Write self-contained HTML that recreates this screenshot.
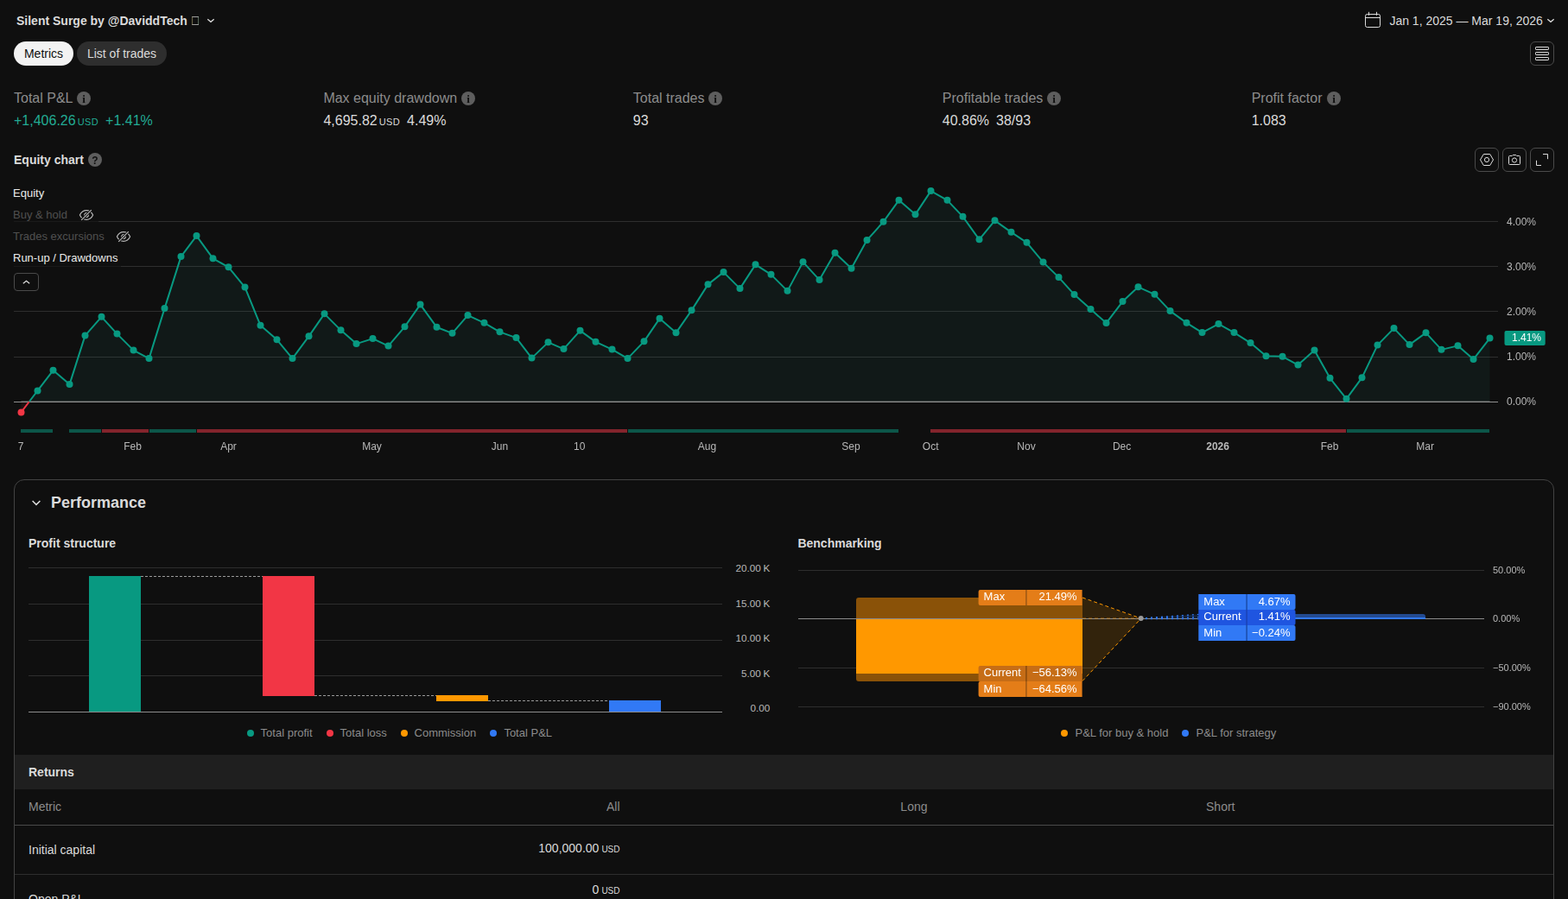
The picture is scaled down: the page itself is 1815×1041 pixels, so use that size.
<!DOCTYPE html>
<html lang="en"><head><meta charset="utf-8"><title>Silent Surge by @DaviddTech - Strategy report</title>
<style>
*{box-sizing:border-box}
html,body{margin:0;padding:0;background:#0f0f0f}
body{width:1815px;height:1041px;overflow:hidden;position:relative;font-family:"Liberation Sans",sans-serif;color:#dbdbdb;font-size:14px;line-height:1}
.a{position:absolute;white-space:nowrap}
.t{position:absolute;white-space:nowrap;line-height:16px;height:16px;font-size:14px}
.c{transform:translateX(-50%)}
.r{transform:translateX(-100%)}
.b{font-weight:700}
.btn{position:absolute;width:28px;height:28px;border:1px solid #4a4a4a;border-radius:6px}
.btn svg{position:absolute;left:-1px;top:-1px}
.lab{color:#8c8c8c;font-size:16px;line-height:18px;height:18px}
.val{color:#dbdbdb;font-size:16px;line-height:18px;height:18px}
.usd{font-variant-caps:all-small-caps;margin-left:2px}
.g8{margin-left:8px}
.ic{position:absolute;width:16px;height:16px;color:#0f0f0f;text-align:center}
.gsl{position:absolute;left:0;top:0;width:1815px;height:1041px;will-change:transform;pointer-events:none}
.ax{font-size:12px;line-height:14px;height:14px;color:#b8b8b8}
.ax11{font-size:11px;line-height:12px;height:12px;color:#b8b8b8}
.lg{font-size:13px;line-height:15px;height:15px}
.leg{font-size:13px;line-height:15px;height:15px;color:#8c8c8c}
.dot{position:absolute;width:8px;height:8px;border-radius:50%}
.tag{position:absolute;height:18px;color:#fff;font-size:13px;line-height:17px;white-space:nowrap}
.hl{position:absolute;height:1px}
</style></head><body>
<div class="t b" style="left:19px;top:16px">Silent Surge by @DaviddTech</div>
<svg class="a" style="left:220px;top:17px" width="12" height="14" viewBox="0 0 12 14"><path d="M2.2 2.500 H10 M2.2 11.500 H10" stroke="#c4c4c4" stroke-width=".8"/><path d="M2.600 2.500 V11.500" stroke="#b8ac78" stroke-width=".6"/><path d="M9.600 2.500 V11.500" stroke="#8fae96" stroke-width=".6"/></svg>
<svg class="a" style="left:238px;top:18px" width="12" height="12" viewBox="0 0 12 12"><path d="M2.3 4.300 L6 7.300 L9.7 4.300" fill="none" stroke="#dbdbdb" stroke-width="1.3"/></svg>
<svg class="a" style="left:1575px;top:10px" width="28" height="28" viewBox="0 0 28 28" fill="none" stroke="#dbdbdb" stroke-width="1"><rect x="5.5" y="6.5" width="17" height="15" rx="2"/><path d="M5.5 10.5h17M9.5 3.8v4M18.5 3.8v4"/></svg>
<div class="t" style="left:1608.4px;top:16px">Jan 1, 2025 — Mar 19, 2026</div>
<svg class="a" style="left:1789px;top:18px" width="12" height="12" viewBox="0 0 12 12"><path d="M2.3 4.300 L6 7.300 L9.7 4.300" fill="none" stroke="#dbdbdb" stroke-width="1.3"/></svg>
<div class="a" style="left:16px;top:48px;width:69px;height:28px;border-radius:14px;background:#f2f2f2;color:#0f0f0f;font-size:14px;line-height:28px;text-align:center">Metrics</div>
<div class="a" style="left:89px;top:48px;width:104px;height:28px;border-radius:14px;background:#2e2e2e;color:#dbdbdb;font-size:14px;line-height:28px;text-align:center">List of trades</div>
<div class="btn" style="left:1771px;top:48px"><svg width="28" height="28" viewBox="0 0 28 28" fill="none" stroke="#dbdbdb" stroke-width="1"><rect x="6.5" y="6.5" width="15" height="3" rx=".6"/><rect x="6.5" y="12.5" width="15" height="3" rx=".6"/><rect x="6.5" y="18.5" width="15" height="3" rx=".6"/></svg></div>
<div class="t lab" style="left:16px;top:105px">Total P&amp;L</div><div class="a" style="left:89px;top:106px;width:16px;height:16px;border-radius:50%;background:#5e5e5e"></div><div class="t val" style="left:16px;top:131px"><span style="color:#22ab94">+1,406.26<span class="usd" style="letter-spacing:.4px">USD</span><span class="g8">+1.41%</span></span></div>
<div class="t lab" style="left:374.4px;top:105px">Max equity drawdown</div><div class="a" style="left:534px;top:106px;width:16px;height:16px;border-radius:50%;background:#5e5e5e"></div><div class="t val" style="left:374.4px;top:131px">4,695.82<span class="usd" style="letter-spacing:.4px">USD</span><span class="g8">4.49%</span></div>
<div class="t lab" style="left:732.8px;top:105px">Total trades</div><div class="a" style="left:820px;top:106px;width:16px;height:16px;border-radius:50%;background:#5e5e5e"></div><div class="t val" style="left:732.8px;top:131px">93</div>
<div class="t lab" style="left:1090.8px;top:105px">Profitable trades</div><div class="a" style="left:1212px;top:106px;width:16px;height:16px;border-radius:50%;background:#5e5e5e"></div><div class="t val" style="left:1090.8px;top:131px">40.86%<span class="g8">38/93</span></div>
<div class="t lab" style="left:1448.7px;top:105px">Profit factor</div><div class="a" style="left:1536px;top:106px;width:16px;height:16px;border-radius:50%;background:#5e5e5e"></div><div class="t val" style="left:1448.7px;top:131px">1.083</div>
<div class="t b" style="left:16px;top:177px">Equity chart</div><div class="a" style="left:102px;top:177px;width:16px;height:16px;border-radius:50%;background:#5e5e5e"></div>
<div class="btn" style="left:1707px;top:171px"><svg width="28" height="28" viewBox="0 0 28 28" fill="none" stroke="#dbdbdb" stroke-width="1"><path d="M10.3 7.500 H17.7 L21.5 14 L17.7 20.5 H10.3 L6.5 14 Z" stroke-linejoin="round"/><circle cx="14" cy="14" r="2.6"/></svg></div>
<div class="btn" style="left:1739px;top:171px"><svg width="28" height="28" viewBox="0 0 28 28" fill="none" stroke="#dbdbdb" stroke-width="1"><path d="M8.5 9.500 H11.3 L12.2 8.5 H15.8 L16.7 9.5 H19.5 a1 1 0 0 1 1 1 V18.500 a1 1 0 0 1 -1 1 H8.5 a1 1 0 0 1 -1 -1 V10.5 a1 1 0 0 1 1 -1 Z" stroke-linejoin="round"/><circle cx="14" cy="14.5" r="2.6"/></svg></div>
<div class="btn" style="left:1771px;top:171px"><svg width="28" height="28" viewBox="0 0 28 28" fill="none" stroke="#dbdbdb" stroke-width="1"><path d="M15 7.500 H20.5 V13.2"/><path d="M7.500 14.8 V20.5 H13"/></svg></div>
<svg class="a" style="left:0;top:0" width="1815" height="540" viewBox="0 0 1815 540">
<rect x="16" y="256" width="1718" height="1" fill="#2e2e2e"/>
<rect x="16" y="308" width="1718" height="1" fill="#2e2e2e"/>
<rect x="16" y="360" width="1718" height="1" fill="#2e2e2e"/>
<rect x="16" y="413" width="1718" height="1" fill="#2e2e2e"/>
<path d="M33.92,465 L43.5,452.4 L61.5,428.8 L80.5,445.1 L98.5,388.6 L117.5,366.85 L135.5,386.6 L154.5,405.6 L172.5,415.1 L190.5,357.1 L209.5,297.1 L227.5,273.1 L246.5,299.35 L264.5,309.35 L283.5,332.6 L301.5,376.85 L320.5,393.35 L338.5,415.1 L357.5,389.35 L375.5,363.35 L394.5,382.35 L412.5,398.1 L431.5,392.1 L449.5,400.6 L468.5,378.35 L486.5,352.6 L505.5,378.85 L523.5,385.85 L541.5,365.1 L560.5,373.85 L578.5,384.35 L597.5,391.1 L615.5,414.6 L634.5,396.35 L652.5,404.1 L671.5,382.85 L689.5,395.85 L708.5,404.6 L726.5,415.1 L745.5,395.35 L763.5,368.85 L782.5,385.35 L800.5,359.35 L819.5,329.35 L837.5,315.1 L856.5,334.1 L874.5,306.35 L892.5,317.85 L911.5,336.85 L929.5,303.35 L948.5,324.1 L966.5,292.85 L985.5,310.85 L1003.5,278.1 L1022.5,256.85 L1040.5,231.85 L1059.5,248.35 L1077.5,221.1 L1096.5,231.85 L1114.5,250.85 L1133.5,277.35 L1151.5,255.35 L1170.5,268.85 L1188.5,280.85 L1207.5,303.6 L1225.5,321.1 L1243.5,341.1 L1262.5,358.1 L1280.5,374.1 L1299.5,349.1 L1317.5,332.35 L1336.5,340.85 L1354.5,360.1 L1373.5,373.85 L1391.5,385.1 L1410.5,375.1 L1428.5,385.1 L1447.5,397.1 L1465.5,412.35 L1484.5,412.85 L1502.5,422.6 L1521.5,405.6 L1539.5,437.85 L1558.5,461.85 L1576.5,437.35 L1594.5,399.6 L1613.5,380.1 L1631.5,399.1 L1650.5,385.35 L1668.5,404.85 L1687.5,400.35 L1705.5,416.1 L1724.5,391.6 L1724.5,465 Z" fill="#2ea594" fill-opacity="0.065"/>
<path d="M24.5,465 L24.5,477.4 L33.92,465 Z" fill="#f23645" fill-opacity="0.08"/>
<rect x="16" y="465" width="1718" height="1" fill="#8f8f8f"/>
<rect x="24.5" y="464" width="1700" height="1" fill="#8c8c8c" fill-opacity="0.4"/>
<path d="M24.5,477.4 L33.92,465" stroke="#f23645" stroke-width="2" fill="none"/>
<path d="M33.92,465 L43.5,452.4 L61.5,428.8 L80.5,445.1 L98.5,388.6 L117.5,366.85 L135.5,386.6 L154.5,405.6 L172.5,415.1 L190.5,357.1 L209.5,297.1 L227.5,273.1 L246.5,299.35 L264.5,309.35 L283.5,332.6 L301.5,376.85 L320.5,393.35 L338.5,415.1 L357.5,389.35 L375.5,363.35 L394.5,382.35 L412.5,398.1 L431.5,392.1 L449.5,400.6 L468.5,378.35 L486.5,352.6 L505.5,378.85 L523.5,385.85 L541.5,365.1 L560.5,373.85 L578.5,384.35 L597.5,391.1 L615.5,414.6 L634.5,396.35 L652.5,404.1 L671.5,382.85 L689.5,395.85 L708.5,404.6 L726.5,415.1 L745.5,395.35 L763.5,368.85 L782.5,385.35 L800.5,359.35 L819.5,329.35 L837.5,315.1 L856.5,334.1 L874.5,306.35 L892.5,317.85 L911.5,336.85 L929.5,303.35 L948.5,324.1 L966.5,292.85 L985.5,310.85 L1003.5,278.1 L1022.5,256.85 L1040.5,231.85 L1059.5,248.35 L1077.5,221.1 L1096.5,231.85 L1114.5,250.85 L1133.5,277.35 L1151.5,255.35 L1170.5,268.85 L1188.5,280.85 L1207.5,303.6 L1225.5,321.1 L1243.5,341.1 L1262.5,358.1 L1280.5,374.1 L1299.5,349.1 L1317.5,332.35 L1336.5,340.85 L1354.5,360.1 L1373.5,373.85 L1391.5,385.1 L1410.5,375.1 L1428.5,385.1 L1447.5,397.1 L1465.5,412.35 L1484.5,412.85 L1502.5,422.6 L1521.5,405.6 L1539.5,437.85 L1558.5,461.85 L1576.5,437.35 L1594.5,399.6 L1613.5,380.1 L1631.5,399.1 L1650.5,385.35 L1668.5,404.85 L1687.5,400.35 L1705.5,416.1 L1724.5,391.6" stroke="#089981" stroke-width="2" fill="none" stroke-linejoin="round"/>
<circle cx="24.5" cy="477.4" r="4" fill="#f23645"/>
<circle cx="43.5" cy="452.4" r="4" fill="#089981"/>
<circle cx="61.5" cy="428.8" r="4" fill="#089981"/>
<circle cx="80.5" cy="445.1" r="4" fill="#089981"/>
<circle cx="98.5" cy="388.6" r="4" fill="#089981"/>
<circle cx="117.5" cy="366.85" r="4" fill="#089981"/>
<circle cx="135.5" cy="386.6" r="4" fill="#089981"/>
<circle cx="154.5" cy="405.6" r="4" fill="#089981"/>
<circle cx="172.5" cy="415.1" r="4" fill="#089981"/>
<circle cx="190.5" cy="357.1" r="4" fill="#089981"/>
<circle cx="209.5" cy="297.1" r="4" fill="#089981"/>
<circle cx="227.5" cy="273.1" r="4" fill="#089981"/>
<circle cx="246.5" cy="299.35" r="4" fill="#089981"/>
<circle cx="264.5" cy="309.35" r="4" fill="#089981"/>
<circle cx="283.5" cy="332.6" r="4" fill="#089981"/>
<circle cx="301.5" cy="376.85" r="4" fill="#089981"/>
<circle cx="320.5" cy="393.35" r="4" fill="#089981"/>
<circle cx="338.5" cy="415.1" r="4" fill="#089981"/>
<circle cx="357.5" cy="389.35" r="4" fill="#089981"/>
<circle cx="375.5" cy="363.35" r="4" fill="#089981"/>
<circle cx="394.5" cy="382.35" r="4" fill="#089981"/>
<circle cx="412.5" cy="398.1" r="4" fill="#089981"/>
<circle cx="431.5" cy="392.1" r="4" fill="#089981"/>
<circle cx="449.5" cy="400.6" r="4" fill="#089981"/>
<circle cx="468.5" cy="378.35" r="4" fill="#089981"/>
<circle cx="486.5" cy="352.6" r="4" fill="#089981"/>
<circle cx="505.5" cy="378.85" r="4" fill="#089981"/>
<circle cx="523.5" cy="385.85" r="4" fill="#089981"/>
<circle cx="541.5" cy="365.1" r="4" fill="#089981"/>
<circle cx="560.5" cy="373.85" r="4" fill="#089981"/>
<circle cx="578.5" cy="384.35" r="4" fill="#089981"/>
<circle cx="597.5" cy="391.1" r="4" fill="#089981"/>
<circle cx="615.5" cy="414.6" r="4" fill="#089981"/>
<circle cx="634.5" cy="396.35" r="4" fill="#089981"/>
<circle cx="652.5" cy="404.1" r="4" fill="#089981"/>
<circle cx="671.5" cy="382.85" r="4" fill="#089981"/>
<circle cx="689.5" cy="395.85" r="4" fill="#089981"/>
<circle cx="708.5" cy="404.6" r="4" fill="#089981"/>
<circle cx="726.5" cy="415.1" r="4" fill="#089981"/>
<circle cx="745.5" cy="395.35" r="4" fill="#089981"/>
<circle cx="763.5" cy="368.85" r="4" fill="#089981"/>
<circle cx="782.5" cy="385.35" r="4" fill="#089981"/>
<circle cx="800.5" cy="359.35" r="4" fill="#089981"/>
<circle cx="819.5" cy="329.35" r="4" fill="#089981"/>
<circle cx="837.5" cy="315.1" r="4" fill="#089981"/>
<circle cx="856.5" cy="334.1" r="4" fill="#089981"/>
<circle cx="874.5" cy="306.35" r="4" fill="#089981"/>
<circle cx="892.5" cy="317.85" r="4" fill="#089981"/>
<circle cx="911.5" cy="336.85" r="4" fill="#089981"/>
<circle cx="929.5" cy="303.35" r="4" fill="#089981"/>
<circle cx="948.5" cy="324.1" r="4" fill="#089981"/>
<circle cx="966.5" cy="292.85" r="4" fill="#089981"/>
<circle cx="985.5" cy="310.85" r="4" fill="#089981"/>
<circle cx="1003.5" cy="278.1" r="4" fill="#089981"/>
<circle cx="1022.5" cy="256.85" r="4" fill="#089981"/>
<circle cx="1040.5" cy="231.85" r="4" fill="#089981"/>
<circle cx="1059.5" cy="248.35" r="4" fill="#089981"/>
<circle cx="1077.5" cy="221.1" r="4" fill="#089981"/>
<circle cx="1096.5" cy="231.85" r="4" fill="#089981"/>
<circle cx="1114.5" cy="250.85" r="4" fill="#089981"/>
<circle cx="1133.5" cy="277.35" r="4" fill="#089981"/>
<circle cx="1151.5" cy="255.35" r="4" fill="#089981"/>
<circle cx="1170.5" cy="268.85" r="4" fill="#089981"/>
<circle cx="1188.5" cy="280.85" r="4" fill="#089981"/>
<circle cx="1207.5" cy="303.6" r="4" fill="#089981"/>
<circle cx="1225.5" cy="321.1" r="4" fill="#089981"/>
<circle cx="1243.5" cy="341.1" r="4" fill="#089981"/>
<circle cx="1262.5" cy="358.1" r="4" fill="#089981"/>
<circle cx="1280.5" cy="374.1" r="4" fill="#089981"/>
<circle cx="1299.5" cy="349.1" r="4" fill="#089981"/>
<circle cx="1317.5" cy="332.35" r="4" fill="#089981"/>
<circle cx="1336.5" cy="340.85" r="4" fill="#089981"/>
<circle cx="1354.5" cy="360.1" r="4" fill="#089981"/>
<circle cx="1373.5" cy="373.85" r="4" fill="#089981"/>
<circle cx="1391.5" cy="385.1" r="4" fill="#089981"/>
<circle cx="1410.5" cy="375.1" r="4" fill="#089981"/>
<circle cx="1428.5" cy="385.1" r="4" fill="#089981"/>
<circle cx="1447.5" cy="397.1" r="4" fill="#089981"/>
<circle cx="1465.5" cy="412.35" r="4" fill="#089981"/>
<circle cx="1484.5" cy="412.85" r="4" fill="#089981"/>
<circle cx="1502.5" cy="422.6" r="4" fill="#089981"/>
<circle cx="1521.5" cy="405.6" r="4" fill="#089981"/>
<circle cx="1539.5" cy="437.85" r="4" fill="#089981"/>
<circle cx="1558.5" cy="461.85" r="4" fill="#089981"/>
<circle cx="1576.5" cy="437.35" r="4" fill="#089981"/>
<circle cx="1594.5" cy="399.6" r="4" fill="#089981"/>
<circle cx="1613.5" cy="380.1" r="4" fill="#089981"/>
<circle cx="1631.5" cy="399.1" r="4" fill="#089981"/>
<circle cx="1650.5" cy="385.35" r="4" fill="#089981"/>
<circle cx="1668.5" cy="404.85" r="4" fill="#089981"/>
<circle cx="1687.5" cy="400.35" r="4" fill="#089981"/>
<circle cx="1705.5" cy="416.1" r="4" fill="#089981"/>
<circle cx="1724.5" cy="391.6" r="4" fill="#089981"/>
<rect x="24" y="497" width="37" height="4" fill="#0c5649"/>
<rect x="80" y="497" width="37" height="4" fill="#0c5649"/>
<rect x="118" y="497" width="54" height="4" fill="#83242c"/>
<rect x="173" y="497" width="54" height="4" fill="#0c5649"/>
<rect x="228" y="497" width="498" height="4" fill="#83242c"/>
<rect x="727" y="497" width="313" height="4" fill="#0c5649"/>
<rect x="1077" y="497" width="481" height="4" fill="#83242c"/>
<rect x="1559" y="497" width="165" height="4" fill="#0c5649"/>
</svg>
<div class="a" style="left:12px;top:214px;width:44px;height:20px;background:rgba(15,15,15,.65)"></div>
<div class="a" style="left:12px;top:239px;width:102px;height:20px;background:rgba(15,15,15,.65)"></div>
<div class="a" style="left:12px;top:264px;width:145px;height:20px;background:rgba(15,15,15,.65)"></div>
<div class="a" style="left:12px;top:289px;width:128px;height:20px;background:rgba(15,15,15,.65)"></div>
<div class="t lg" style="left:15px;top:216px;color:#ebebeb">Equity</div>
<div class="t lg" style="left:15px;top:241px;color:#505050">Buy &amp; hold</div><svg class="a" style="left:91px;top:242px" width="18" height="14" viewBox="0 0 18 14" fill="none" stroke="#b8b8b8" stroke-width="1.2"><path d="M1.4 7 C3.2 3.200 6 1.700 9 1.700 S14.8 3.200 16.6 7 C14.8 10.800 12 12.300 9 12.300 S3.2 10.800 1.4 7 z"/><circle cx="9" cy="7" r="2.3"/><path d="M3.2 12.8 L14.8 1.2" stroke="#0f0f0f" stroke-width="3"/><path d="M3.2 12.8 L14.8 1.2"/></svg>
<div class="t lg" style="left:15px;top:266px;color:#505050">Trades excursions</div><svg class="a" style="left:134px;top:267px" width="18" height="14" viewBox="0 0 18 14" fill="none" stroke="#b8b8b8" stroke-width="1.2"><path d="M1.4 7 C3.2 3.200 6 1.700 9 1.700 S14.8 3.200 16.6 7 C14.8 10.800 12 12.300 9 12.300 S3.2 10.800 1.4 7 z"/><circle cx="9" cy="7" r="2.3"/><path d="M3.2 12.8 L14.8 1.2" stroke="#0f0f0f" stroke-width="3"/><path d="M3.2 12.8 L14.8 1.2"/></svg>
<div class="t lg" style="left:15px;top:291px;color:#ebebeb">Run-up / Drawdowns</div>
<div class="a" style="left:16px;top:316px;width:29px;height:21px;border:1px solid #4a4a4a;border-radius:4px;background:#0f0f0f"><svg class="a" style="left:-1px;top:-1px" width="29" height="21" viewBox="0 0 29 21"><path d="M10.8 12.300 L14.5 9.300 L18.2 12.300" fill="none" stroke="#dbdbdb" stroke-width="1.3"/></svg></div>

<svg class="a" style="left:1740px;top:382px" width="52" height="20" viewBox="1740 382 52 20"><rect x="1741.5" y="383" width="47.2" height="17" rx="2" fill="#089981"/></svg>
<div class="a" style="left:16px;top:555px;width:1783px;height:520px;border:1px solid #434343;border-radius:12px"></div>
<svg class="a" style="left:34px;top:574px" width="16" height="16" viewBox="0 0 16 16"><path d="M3.6 6 L8 10.4 L12.4 6" fill="none" stroke="#dbdbdb" stroke-width="1.5"/></svg>
<div class="t b" style="left:59px;top:572px;font-size:18px;line-height:21px;height:21px">Performance</div>
<div class="t b" style="left:33px;top:621px">Profit structure</div>
<div class="t b" style="left:923.4px;top:621px">Benchmarking</div>
<svg class="a" style="left:0;top:640px" width="910" height="200" viewBox="0 640 910 200"><rect x="33" y="657" width="803" height="1" fill="#2e2e2e"/><rect x="33" y="699" width="803" height="1" fill="#2e2e2e"/><rect x="33" y="741" width="803" height="1" fill="#2e2e2e"/><rect x="33" y="782" width="803" height="1" fill="#2e2e2e"/><rect x="103" y="667" width="60" height="157" fill="#089981"/><rect x="304" y="667" width="60" height="139" fill="#f23645"/><rect x="505" y="805" width="60" height="7" fill="#ff9800"/><rect x="705" y="811" width="60" height="13" fill="#3179f5"/><path d="M163 667.5 H304" stroke="#9a9a9a" stroke-width="1" stroke-dasharray="3 2"/><path d="M364 805.5 H505" stroke="#9a9a9a" stroke-width="1" stroke-dasharray="3 2"/><path d="M565 811.5 H705" stroke="#9a9a9a" stroke-width="1" stroke-dasharray="3 2"/><rect x="33" y="824" width="803" height="1" fill="#8c8c8c"/></svg>
<div class="t ax r" style="left:891.2px;top:651px;font-size:11.7px;word-spacing:-.7px">20.00 K</div><div class="t ax r" style="left:891.2px;top:692px;font-size:11.7px;word-spacing:-.7px">15.00 K</div><div class="t ax r" style="left:891.2px;top:732px;font-size:11.7px;word-spacing:-.7px">10.00 K</div><div class="t ax r" style="left:891.2px;top:773px;font-size:11.7px;word-spacing:-.7px">5.00 K</div><div class="t ax r" style="left:891.2px;top:813px;font-size:11.7px;word-spacing:-.7px">0.00</div>
<div class="dot" style="left:286px;top:845px;background:#089981"></div><div class="t leg" style="left:301.6px;top:841px">Total profit</div><div class="dot" style="left:378px;top:845px;background:#f23645"></div><div class="t leg" style="left:393.6px;top:841px">Total loss</div><div class="dot" style="left:464px;top:845px;background:#ff9800"></div><div class="t leg" style="left:479.6px;top:841px">Commission</div><div class="dot" style="left:567px;top:845px;background:#3179f5"></div><div class="t leg" style="left:583.4px;top:841px">Total P&amp;L</div>
<svg class="a" style="left:910px;top:640px" width="905" height="200" viewBox="910 640 905 200"><rect x="924" y="660" width="794" height="1" fill="#2e2e2e"/><rect x="924" y="773" width="794" height="1" fill="#2e2e2e"/><rect x="924" y="818" width="794" height="1" fill="#2e2e2e"/><path d="M1253 692 L1320.5 716.5 L1253 788.5 Z" fill="#ff9800" fill-opacity="0.15"/><path d="M994 692 H1253 V789 H994 a3 3 0 0 1 -3 -3 V695 a3 3 0 0 1 3 -3 z" fill="#8a5208"/><rect x="991" y="717" width="262" height="63" fill="#ff9800"/><rect x="924" y="716" width="794" height="1" fill="#8c8c8c"/><path d="M1253 692 L1320.5 716 M1253 788.5 L1320.5 716.500" stroke="#ff9800" stroke-width="1" stroke-dasharray="4 3" fill="none"/><path d="M1253 716 L1320.5 716" stroke="#ff9800" stroke-opacity="0.55" stroke-width="1" stroke-dasharray="4 3" fill="none"/><path d="M1320.5 716 L1387.5 711.3 V716.8 Z" fill="#3179f5" fill-opacity="0.18"/><path d="M1326 715.6 L1387.5 711.5 M1326 716.1 L1387.5 714.6 M1326 716.6 L1387.5 716.6" stroke="#3179f5" stroke-width="1.4" stroke-dasharray="2 4" fill="none"/><path d="M1499 711 H1647 a3 3 0 0 1 3 3 V717 H1499 z" fill="#234a8f"/><rect x="1499" y="715" width="151" height="2" fill="#3179f5"/><circle cx="1320.7" cy="716" r="3" fill="#9a9a9a"/></svg>
<svg class="a" style="left:1130px;top:683px" width="126" height="18" viewBox="1130 683 126 18"><path d="M1134.6 683 H1252.6 V701 H1134.6 a2 2 0 0 1 -2 -2 V685 a2 2 0 0 1 2 -2 Z" fill="#e47d18"/><rect x="1187.1" y="683" width="1.6" height="18" fill="#a05a14"/></svg><svg class="a" style="left:1130px;top:771px" width="126" height="18" viewBox="1130 771 126 18"><path d="M1134.6 771 H1252.6 V789 H1134.6 a2 2 0 0 1 -2 -2 V773 a2 2 0 0 1 2 -2 Z" fill="#c66d16"/><rect x="1187.1" y="771" width="1.6" height="18" fill="#8c4c0e"/></svg><svg class="a" style="left:1130px;top:789px" width="126" height="18" viewBox="1130 789 126 18"><path d="M1134.6 789 H1252.6 V807 H1134.6 a2 2 0 0 1 -2 -2 V791 a2 2 0 0 1 2 -2 Z" fill="#e47d18"/><rect x="1187.1" y="789" width="1.6" height="18" fill="#a05a14"/></svg><svg class="a" style="left:1385px;top:688px" width="118" height="18" viewBox="1385 688 118 18"><path d="M1387.3 688 H1497.5 a2 2 0 0 1 2 2 V704 a2 2 0 0 1 -2 2 H1387.3 Z" fill="#3179f5"/><rect x="1442.3" y="688" width="1.6" height="18" fill="#1d4fae"/></svg><svg class="a" style="left:1385px;top:706px" width="118" height="18" viewBox="1385 706 118 18"><path d="M1387.3 706 H1497.5 a2 2 0 0 1 2 2 V722 a2 2 0 0 1 -2 2 H1387.3 Z" fill="#1f55e0"/><rect x="1442.3" y="706" width="1.6" height="18" fill="#1a44b8"/></svg><svg class="a" style="left:1385px;top:724px" width="118" height="18" viewBox="1385 724 118 18"><path d="M1387.3 724 H1497.5 a2 2 0 0 1 2 2 V740 a2 2 0 0 1 -2 2 H1387.3 Z" fill="#3179f5"/><rect x="1442.3" y="724" width="1.6" height="18" fill="#1d4fae"/></svg>

<div class="dot" style="left:1228px;top:845px;background:#ff9800"></div><div class="t leg" style="left:1244.5px;top:841px">P&amp;L for buy &amp; hold</div><div class="dot" style="left:1368px;top:845px;background:#3179f5"></div><div class="t leg" style="left:1384.5px;top:841px">P&amp;L for strategy</div>
<div class="a" style="left:17px;top:874px;width:1781px;height:40px;background:#1f1f1f"></div>
<div class="t b" style="left:33px;top:886px">Returns</div>
<div class="t" style="left:33px;top:926px;color:#8c8c8c">Metric</div>
<div class="t r" style="left:717.5px;top:926px;color:#8c8c8c">All</div>
<div class="t r" style="left:1073.5px;top:926px;color:#8c8c8c">Long</div>
<div class="t r" style="left:1429.5px;top:926px;color:#8c8c8c">Short</div>
<div class="hl" style="left:17px;top:955px;width:1781px;background:#4a4a4a"></div>
<div class="t" style="left:33px;top:976px">Initial capital</div>
<div class="t r" style="left:717.5px;top:974px">100,000.00<span class="usd" style="margin-left:3px">USD</span></div>
<div class="hl" style="left:17px;top:1012px;width:1781px;background:#2e2e2e"></div>
<div class="t" style="left:33px;top:1033px">Open P&amp;L</div>
<div class="t r" style="left:717.5px;top:1022px">0<span class="usd" style="margin-left:3px">USD</span></div>
<div class="gsl"><div class="t ax c" style="left:24px;top:510px">7</div><div class="t ax c" style="left:153.5px;top:510px">Feb</div><div class="t ax c" style="left:264.5px;top:510px">Apr</div><div class="t ax c" style="left:430.5px;top:510px">May</div><div class="t ax c" style="left:578.5px;top:510px">Jun</div><div class="t ax c" style="left:670.7px;top:510px">10</div><div class="t ax c" style="left:818.4px;top:510px">Aug</div><div class="t ax c" style="left:985px;top:510px">Sep</div><div class="t ax c" style="left:1077.2px;top:510px">Oct</div><div class="t ax c" style="left:1188px;top:510px">Nov</div><div class="t ax c" style="left:1298.6px;top:510px">Dec</div><div class="t ax c" style="left:1409.6px;top:510px"><b>2026</b></div><div class="t ax c" style="left:1539px;top:510px">Feb</div><div class="t ax c" style="left:1649.6px;top:510px">Mar</div><div class="t ax" style="left:1744px;top:249.5px">4.00%</div><div class="t ax" style="left:1744px;top:301.5px">3.00%</div><div class="t ax" style="left:1744px;top:353.5px">2.00%</div><div class="t ax" style="left:1744px;top:406px">1.00%</div><div class="t ax" style="left:1744px;top:458px">0.00%</div><div class="t ax r" style="left:1784px;top:384px;color:#fff">1.41%</div><div class="tag" style="left:1138.6px;top:683px;line-height:15px">Max</div><div class="tag r" style="left:1246.6px;top:683px;line-height:15px">21.49%</div><div class="tag" style="left:1138.6px;top:771px;line-height:15px">Current</div><div class="tag r" style="left:1246.6px;top:771px;line-height:15px">−56.13%</div><div class="tag" style="left:1138.6px;top:789px;line-height:17px">Min</div><div class="tag r" style="left:1246.6px;top:789px;line-height:17px">−64.56%</div><div class="tag" style="left:1393.3px;top:688px;line-height:17px">Max</div><div class="tag r" style="left:1493.5px;top:688px;line-height:17px">4.67%</div><div class="tag" style="left:1393.3px;top:706px;line-height:15px">Current</div><div class="tag r" style="left:1493.5px;top:706px;line-height:15px">1.41%</div><div class="tag" style="left:1393.3px;top:724px;line-height:17px">Min</div><div class="tag r" style="left:1493.5px;top:724px;line-height:17px">−0.24%</div><div class="t ax11" style="left:1728px;top:653.5px">50.00%</div><div class="t ax11" style="left:1728px;top:709.5px">0.00%</div><div class="t ax11" style="left:1728px;top:766.5px">−50.00%</div><div class="t ax11" style="left:1728px;top:812px">−90.00%</div><div class="ic" style="left:89px;top:106px;font:700 13px/17px 'Liberation Serif',serif">i</div><div class="ic" style="left:534px;top:106px;font:700 13px/17px 'Liberation Serif',serif">i</div><div class="ic" style="left:820px;top:106px;font:700 13px/17px 'Liberation Serif',serif">i</div><div class="ic" style="left:1212px;top:106px;font:700 13px/17px 'Liberation Serif',serif">i</div><div class="ic" style="left:1536px;top:106px;font:700 13px/17px 'Liberation Serif',serif">i</div><div class="ic" style="left:102px;top:177px;font:700 12px/19px 'Liberation Sans',sans-serif">?</div></div>
</body></html>
